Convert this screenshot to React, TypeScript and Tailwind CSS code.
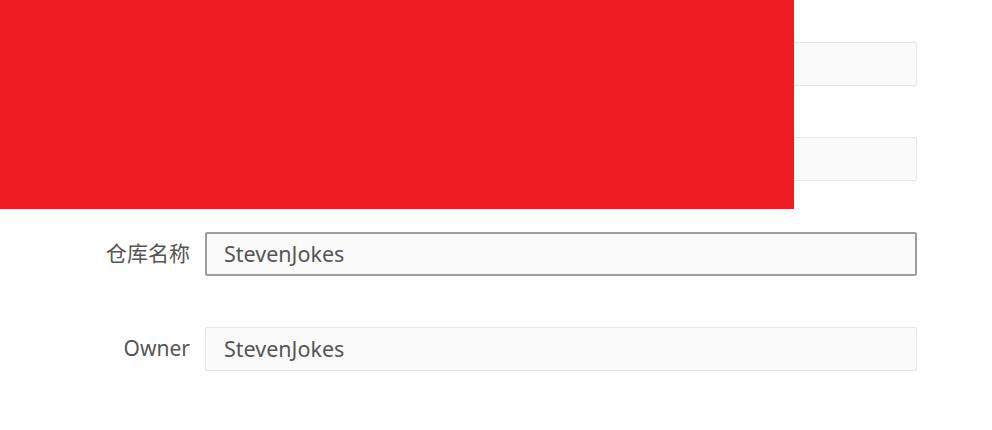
const rows = [
  { label: '', value: '' },
  { label: '', value: '' },
  { label: '仓库名称', value: 'StevenJokes', focused: true },
  { label: 'Owner', value: 'StevenJokes' },
]

export default function App() {
  return (
    <div
      className="relative w-[992px] h-[430px] bg-white overflow-hidden"
      style={{ fontFamily: '"Noto Sans", "Noto Sans CJK SC", sans-serif' }}
    >
      <div className="flex flex-col gap-[51px] pt-[42px]">
        {rows.map((row, i) => (
          <div key={i} className="flex items-center">
            <label className="w-[190px] text-right text-[21px] text-[#555]">{row.label}</label>
            <div
              className={
                row.focused
                  ? 'ml-[15px] w-[712px] h-[44px] flex items-center pl-[17px] bg-[#fafafa] border-2 border-[#a29b9b] rounded-[2px] text-[21.5px] text-[#555]'
                  : 'ml-[15px] w-[712px] h-[44px] flex items-center pl-[18px] bg-[#fafafa] border border-[#e6e6e6] rounded-[2px] text-[21.5px] text-[#555]'
              }
            >
              {row.value}
            </div>
          </div>
        ))}
      </div>
      {/* redaction block */}
      <div className="absolute left-0 top-0 w-[794px] h-[209px] bg-[#ee1c25]" />
    </div>
  )
}
